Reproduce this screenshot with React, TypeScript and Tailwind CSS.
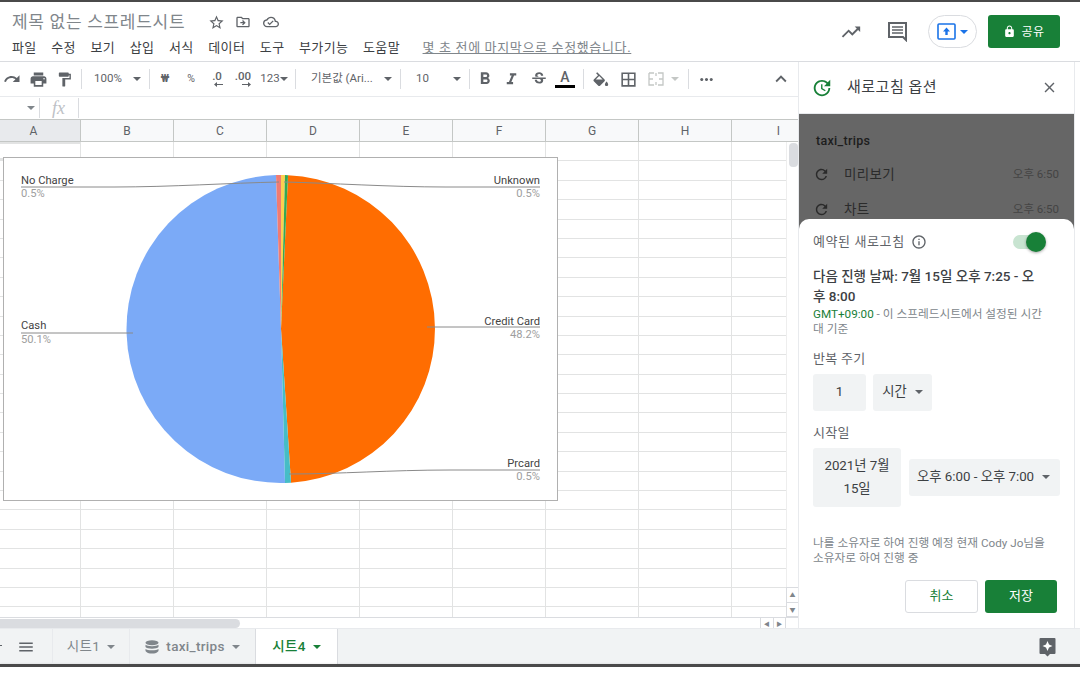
import type { ReactNode } from 'react'
import {
  MdStarBorder,
  MdOutlineDriveFileMove,
  MdOutlineCloudDone,
  MdTrendingUp,
  MdLock,
  MdRedo,
  MdPrint,
  MdFormatPaint,
  MdFormatBold,
  MdFormatItalic,
  MdStrikethroughS,
  MdBorderAll,
  MdMoreHoriz,
  MdExpandLess,
  MdRefresh,
  MdUpdate,
  MdInfoOutline,
  MdClose,
  MdMenu,
} from 'react-icons/md'

const font = 'font-[Roboto,"Noto_Sans_CJK_KR",sans-serif]'
const menus = ['파일', '수정', '보기', '삽입', '서식', '데이터', '도구', '부가기능', '도움말']
const columns = ['B', 'C', 'D', 'E', 'F', 'G', 'H']

function Caret({ className = 'border-t-[#5f6368]' }: { className?: string }) {
  return <span className={`inline-block w-0 h-0 border-x-[4px] border-x-transparent border-t-[4px] ${className}`} />
}

function Sep() {
  return <span className="w-px h-[20px] bg-[#dadce0] shrink-0" />
}

function Cell({ className, children }: { className: string; children?: ReactNode }) {
  return <div className={`flex items-center justify-center shrink-0 text-[#5f6368] whitespace-nowrap ${className}`}>{children}</div>
}

function DecimalBtn({ label, dir }: { label: string; dir: 'left' | 'right' }) {
  return (
    <div className="flex flex-col items-center leading-[11px]">
      <span className="text-[11.5px] font-medium">{label}</span>
      <svg width="10" height="5" viewBox="0 0 10 5" className={dir === 'right' ? 'ml-[6px]' : 'ml-[4px]'}>
        {dir === 'left' ? <path d="M3 0 L0 2.500 L3 5 V3 H9 V2 H3 Z" fill="#5f6368" /> : <path d="M7 0 L10 2.500 L7 5 V3 H1 V2 H7 Z" fill="#5f6368" />}
      </svg>
    </div>
  )
}

function PieChart() {
  return (
    <svg width="553" height="342" viewBox="4 158 553 342" className="block">
      <path d="M281 329 L288 175.160 A154 154 0 0 1 291 482.670 Z" fill="#ff6d01" />
      <path d="M281 329 L285 482.950 A154 154 0 1 1 276 175.080 Z" fill="#7baaf7" />
      <path d="M281 329 L276 175.080 L281 175 Z" fill="#f07b72" />
      <path d="M281 329 L281 175 L285 175.050 Z" fill="#fcd04f" />
      <path d="M281 329 L285 175.050 L288 175.160 Z" fill="#34a853" />
      <path d="M281 329 L291 482.670 L285 482.950 Z" fill="#46bdc6" />
      <g fill="none" stroke="#8a8a8a" strokeWidth="1">
        <path d="M21 187 H115 C170 187 230 183 279 182" />
        <path d="M540 187 H445 C390 187 330 183 284 182" />
        <path d="M21 333 H133" />
        <path d="M540 327 H427" />
        <path d="M540 470 H450 C390 470 340 474 289 474" />
      </g>
      <g fontSize="11.2" fontFamily="Roboto, sans-serif">
        <text x="21" y="183.500" fill="#444">No Charge</text>
        <text x="21" y="197" fill="#9e9e9e">0.5%</text>
        <text x="540" y="183.500" fill="#444" textAnchor="end">Unknown</text>
        <text x="540" y="197" fill="#9e9e9e" textAnchor="end">0.5%</text>
        <text x="21" y="329" fill="#444">Cash</text>
        <text x="21" y="343" fill="#9e9e9e">50.1%</text>
        <text x="540" y="324.500" fill="#444" textAnchor="end">Credit Card</text>
        <text x="540" y="338" fill="#9e9e9e" textAnchor="end">48.2%</text>
        <text x="540" y="466.500" fill="#444" textAnchor="end">Prcard</text>
        <text x="540" y="480" fill="#9e9e9e" textAnchor="end">0.5%</text>
      </g>
    </svg>
  )
}

function Sheet() {
  return (
    <div className="relative flex-1 overflow-hidden">
      <div className="flex h-[23px] bg-[#f8f9fa] border-t border-b border-[#c4c7c5] text-[12px] text-[#5f6368]">
        <div className="w-[81px] shrink-0 bg-[#e8eaed] border-r border-[#c4c7c5] flex items-center justify-center pr-[13px]">A</div>
        {columns.map((c) => (
          <div key={c} className="w-[93px] shrink-0 border-r border-[#c4c7c5] flex items-center justify-center">{c}</div>
        ))}
        <div className="w-[93px] shrink-0 flex items-center justify-center">I</div>
      </div>
      <div className="h-[475px] overflow-hidden">
        {Array.from({ length: 25 }).map((_, r) => (
          <div key={r} className="flex h-[19.4px] border-b border-[#e2e3e3]">
            <div className={`w-[81px] shrink-0 border-r border-[#e2e3e3] ${r === 0 ? 'border-2 border-[#1a73e8] border-l-0' : ''}`} />
            {columns.map((c) => (
              <div key={c} className="w-[93px] shrink-0 border-r border-[#e2e3e3]" />
            ))}
            <div className="w-[93px] shrink-0" />
          </div>
        ))}
      </div>
      <div className="absolute left-[3px] top-[38px] border border-[#b0b0b0] bg-white">
        <PieChart />
      </div>
      {/* scrollbars */}
      <div className="absolute right-0 top-[23px] bottom-[11px] w-[12px] bg-white border-l border-[#eeeeee]">
        <div className="ml-[2px] mt-px w-[9px] h-[24px] rounded-[4px] bg-[#dadce0]" />
      </div>
      <div className="absolute right-0 bottom-[11px] w-[12px] h-[30px] flex flex-col bg-white border-y border-l border-[#dadce0] items-center text-[6px] text-[#80868b]">
        <span className="flex-1 flex items-center border-b border-[#dadce0] w-full justify-center">▲</span>
        <span className="flex-1 flex items-center justify-center">▼</span>
      </div>
      <div className="absolute left-0 right-0 bottom-0 h-[11px] bg-white border-t border-[#dadce0] flex items-center">
        <div className="w-[240px] h-[9px] rounded-r-[5px] bg-[#dadce0]" />
        <div className="ml-[520px] flex w-[26px] h-full border-x border-[#dadce0] text-[6px] text-[#80868b]">
          <span className="flex-1 flex items-center justify-center border-r border-[#dadce0]">◀</span>
          <span className="flex-1 flex items-center justify-center">▶</span>
        </div>
      </div>
    </div>
  )
}

function RefreshRow({ label }: { label: string }) {
  return (
    <div className="flex items-center h-[35px] pl-[14px] pr-[15px] text-[#2b2b2b]">
      <MdRefresh className="text-[#2a2a2a] w-[17px] h-[17px]" />
      <span className="ml-[14px] text-[13.5px] tracking-[0.3px]">{label}</span>
      <span className="ml-auto text-[11.5px] text-[#444444]">오후 6:50</span>
    </div>
  )
}

function SidePanel() {
  return (
    <div className="w-[276px] shrink-0 flex flex-col border-l border-[#e8eaed] bg-white">
      <div className="h-[52px] shrink-0 flex items-center pl-[12px] pr-[16px] border-b border-[#e8eaed]">
        <MdUpdate className="w-[22px] h-[22px] text-[#188038]" />
        <span className="ml-[14px] text-[15px] tracking-[0.5px] text-[#3c4043]">새로고침 옵션</span>
        <MdClose className="ml-auto w-[17px] h-[17px] text-[#5f6368]" />
      </div>
      <div className="relative flex-1 bg-[#666666]">
        <div className="pt-[18px]">
          <div className="pl-[17px] text-[12.5px] font-medium text-[#1d1d1d] h-[25px] tracking-[0.3px]">taxi_trips</div>
          <RefreshRow label="미리보기" />
          <RefreshRow label="차트" />
        </div>
        <div className="absolute left-0 right-0 top-[105px] bottom-0 bg-white rounded-t-[10px] pl-[14px] pr-[14px] pt-[13px]">
          <div className="flex items-center h-[20px]">
            <span className="text-[13px] tracking-[0.6px] text-[#5f6368]">예약된 새로고침</span>
            <MdInfoOutline className="ml-[6px] w-[16px] h-[16px] text-[#5f6368]" />
            <div className="relative ml-auto mr-[19px] w-[28px] h-[14px] rounded-full bg-[#c8e4d1]">
              <span className="absolute -right-[5px] -top-[3px] w-[20px] h-[20px] rounded-full bg-[#188038] shadow-[0_1px_3px_rgba(0,0,0,0.35)]" />
            </div>
          </div>
          <p className="mt-[15px] text-[13.5px] leading-[19.5px] font-medium text-[#3c4043] w-[228px]">
            다음 진행 날짜: 7월 15일 오후 7:25 - 오후 8:00
          </p>
          <p className="mt-[1px] text-[11.7px] leading-[15px] text-[#80868b] w-[236px]">
            <span className="text-[#188038]">GMT+09:00</span> - 이 스프레드시트에서 설정된 시간대 기준
          </p>
          <div className="mt-[11.5px] text-[13px] tracking-[0.3px] text-[#5f6368] leading-[20px]">반복 주기</div>
          <div className="mt-[5px] flex gap-[7px]">
            <div className="w-[53px] h-[37px] rounded-[3px] bg-[#f1f3f4] flex items-center justify-center text-[13.3px] text-[#3c4043]">1</div>
            <div className="w-[59px] h-[37px] rounded-[3px] bg-[#f1f3f4] flex items-center justify-center gap-[8px] text-[13.3px] text-[#3c4043]">
              시간 <Caret />
            </div>
          </div>
          <div className="mt-[12px] text-[13px] tracking-[0.3px] text-[#5f6368] leading-[20px]">시작일</div>
          <div className="mt-[5px] flex items-center gap-[8px]">
            <div className="w-[88px] h-[59px] rounded-[3px] bg-[#f1f3f4] flex items-center justify-center text-center px-[10px] text-[13.3px] leading-[23px] text-[#3c4043]">
              2021년 7월 15일
            </div>
            <div className="w-[151px] h-[37px] rounded-[3px] bg-[#f1f3f4] flex items-center pl-[8px] gap-[8px] text-[13.3px] text-[#3c4043] whitespace-nowrap">
              오후 6:00 - 오후 7:00 <Caret />
            </div>
          </div>
          <p className="mt-[29.5px] text-[11.7px] leading-[15px] text-[#80868b] w-[240px]">
            나를 소유자로 하여 진행 예정 현재 Cody Jo님을 소유자로 하여 진행 중
          </p>
          <div className="mt-[13.5px] flex justify-end gap-[7px] pr-[3px]">
            <button className="w-[73px] h-[33px] rounded-[3px] border border-[#dadce0] text-[13px] text-[#188038]">취소</button>
            <button className="w-[72px] h-[33px] rounded-[3px] bg-[#188038] text-[13px] text-white">저장</button>
          </div>
        </div>
      </div>
    </div>
  )
}

export default function App() {
  return (
    <div className={`w-[1080px] h-[675px] overflow-hidden bg-white flex flex-col ${font}`}>
      <div className="h-[2px] shrink-0 bg-[#4a4a4a]" />
      {/* title + menu */}
      <div className="h-[60px] shrink-0 flex items-start border-b border-[#dadce0]">
        <div className="flex-1 pl-[12px] pt-[8px]">
          <div className="flex items-center h-[24px]">
            <span className="text-[17px] tracking-[0.7px] text-[#80868b] leading-[24px]">제목 없는 스프레드시트</span>
            <MdStarBorder className="ml-[23px] w-[17px] h-[17px] text-[#5f6368]" />
            <MdOutlineDriveFileMove className="ml-[10px] w-[16px] h-[16px] text-[#5f6368]" />
            <MdOutlineCloudDone className="ml-[12px] w-[16px] h-[16px] text-[#5f6368]" />
          </div>
          <div className="flex items-center mt-[4px] text-[13px] text-[#3c4043] leading-[20px] tracking-[0.4px]">
            {menus.map((m) => (
              <span key={m} className="mr-[14.5px] whitespace-nowrap">{m}</span>
            ))}
            <span className="ml-[8px] underline text-[#80868b] whitespace-nowrap tracking-[0.65px]">몇 초 전에 마지막으로 수정했습니다.</span>
          </div>
        </div>
        <div className="flex items-center mt-[13px] mr-[20px]">
          <MdTrendingUp className="w-[22px] h-[22px] text-[#5f6368]" />
          <svg width="21" height="21" viewBox="0 0 21 21" className="ml-[25px]">
            <path d="M2 2 H19 V19 L16 16 H2 Z" fill="none" stroke="#5f6368" strokeWidth="2" />
            <path d="M5 6 H16 M5 9 H16 M5 12 H16" stroke="#5f6368" strokeWidth="1.5" />
          </svg>
          <div className="ml-[20px] w-[49px] h-[33px] rounded-full border border-[#dadce0] flex items-center justify-center gap-[3px]">
            <svg width="20" height="17" viewBox="0 0 20 17">
              <rect x="1" y="1" width="17" height="15" rx="1" fill="none" stroke="#1a73e8" strokeWidth="1.6" />
              <path d="M9.500 4.500 L13 8.500 H10.700 V12 H8.300 V8.500 H6 Z" fill="#1a73e8" />
            </svg>
            <Caret className="border-t-[#1a73e8]" />
          </div>
          <div className="ml-[11px] w-[72px] h-[33px] rounded-[3px] bg-[#188038] flex items-center justify-center gap-[5px] text-white text-[12px] tracking-[0.5px]">
            <MdLock className="w-[13px] h-[13px]" /> 공유
          </div>
        </div>
      </div>
      {/* body */}
      <div className="h-[566px] shrink-0 flex min-h-0">
        <div className="flex-1 min-w-0 flex flex-col">
          <div className="h-[35px] shrink-0 flex items-center border-b border-[#e8eaed] text-[11.5px]">
            <Cell className="w-[24px]"><MdRedo className="w-[18px] h-[18px]" /></Cell>
            <Cell className="w-[28px]"><MdPrint className="w-[19px] h-[19px]" /></Cell>
            <Cell className="w-[24px]"><MdFormatPaint className="w-[17px] h-[17px]" /></Cell>
            <span className="ml-[5px] flex"><Sep /></span>
            <Cell className="ml-[6px] w-[40px]">100%</Cell>
            <Cell className="w-[18px]"><Caret /></Cell>
            <span className="ml-[3px] flex"><Sep /></span>
            <Cell className="ml-[2px] w-[26px] text-[10.5px] font-bold">₩</Cell>
            <Cell className="w-[26px] text-[10.5px]">%</Cell>
            <Cell className="w-[26px]"><DecimalBtn label=".0" dir="left" /></Cell>
            <Cell className="w-[26px]"><DecimalBtn label=".00" dir="right" /></Cell>
            <Cell className="ml-[4px] w-[20px]">123</Cell>
            <Cell className="w-[8px]"><Caret /></Cell>
            <span className="ml-[7px] flex"><Sep /></span>
            <Cell className="ml-[15px] w-[69px] justify-start!">기본값 (Ari...</Cell>
            <Cell className="w-[16px]"><Caret /></Cell>
            <span className="ml-[4px] flex"><Sep /></span>
            <Cell className="ml-[15px] w-[32px] justify-start! text-[#3c4043]">10</Cell>
            <Cell className="w-[18px]"><Caret /></Cell>
            <span className="ml-[3px] flex"><Sep /></span>
            <Cell className="ml-[2px] w-[26px]"><MdFormatBold className="w-[20px] h-[20px]" /></Cell>
            <Cell className="w-[27px]"><MdFormatItalic className="w-[19px] h-[19px]" /></Cell>
            <Cell className="w-[27px]"><MdStrikethroughS className="w-[18px] h-[18px]" /></Cell>
            <Cell className="w-[26px]">
              <span className="flex flex-col items-center">
                <span className="text-[14px] leading-[15px] font-medium">A</span>
                <span className="w-[20px] h-[3px] bg-black" />
              </span>
            </Cell>
            <span className="ml-[5px] flex"><Sep /></span>
            <Cell className="ml-[3px] w-[26px]">
              <svg width="18" height="17" viewBox="0 0 22 18" fill="#5f6368">
                <path d="M16.560 8.940 L7.620 0 L6.210 1.410 L8.590 3.790 L3.440 8.940 C2.850 9.530 2.850 10.480 3.440 11.060 L8.940 16.560 C9.230 16.850 9.620 17 10 17 C10.380 17 10.770 16.850 11.060 16.560 L16.560 11.060 C17.150 10.480 17.150 9.530 16.560 8.940 Z" />
                <path d="M19 11.500 C19 11.500 17 13.670 17 15 C17 16.100 17.900 17 19 17 C20.100 17 21 16.100 21 15 C21 13.670 19 11.500 19 11.500 Z" />
                <path d="M5.800 9 L10 4.800 L14.200 9 Z" fill="#fff" />
              </svg>
            </Cell>
            <Cell className="ml-[2px] w-[26px]"><MdBorderAll className="w-[19px] h-[19px]" /></Cell>
            <Cell className="ml-[4px] w-[22px]">
              <svg width="16" height="14" viewBox="0 0 16 14">
                <path d="M1 1 H6 M10 1 H15 V13 H10 M6 13 H1 V1 M1 7 H5 M11 7 H15 M8 1 V4 M8 10 V13" fill="none" stroke="#c4c7c5" strokeWidth="1.3" />
              </svg>
            </Cell>
            <Cell className="w-[16px]"><Caret className="border-t-[#c4c7c5]" /></Cell>
            <span className="ml-[5px] flex"><Sep /></span>
            <Cell className="ml-[4px] w-[26px]"><MdMoreHoriz className="w-[19px] h-[19px]" /></Cell>
            <MdExpandLess className="ml-auto mr-[6px] w-[22px] h-[22px] text-[#5f6368]" />
          </div>
          <div className="h-[22px] shrink-0 flex items-center">
            <span className="ml-[27px] flex"><Caret className="border-t-[#80868b]" /></span>
            <span className="ml-[4px] flex"><Sep /></span>
            <span className="ml-[12px] w-[19px] text-[18px] leading-[20px] italic text-[#bdc1c6] font-['Liberation_Serif',serif]">fx</span>
            <span className="ml-[7px] flex"><Sep /></span>
          </div>
          <Sheet />
        </div>
        <SidePanel />
        <div className="w-[6px] shrink-0 bg-white border-l border-[#e8eaed]" />
      </div>
      {/* sheet tabs */}
      <div className="h-[36px] shrink-0 flex items-stretch bg-[#f1f3f4] border-t border-[#e8eaed] text-[13.5px] text-[#80868b] tracking-[0.3px]">
        <div className="w-[53px] flex items-center border-r border-[#e8eaed] relative">
          <span className="absolute left-0 top-[16px] w-[2px] h-px bg-[#5f6368]" />
          <MdMenu className="ml-[17px] w-[18px] h-[18px] text-[#5f6368]" />
        </div>
        <div className="w-[77px] flex items-center justify-center gap-[7px] border-r border-[#e8eaed]">
          시트1 <Caret className="border-t-[#80868b]" />
        </div>
        <div className="w-[126px] flex items-center justify-center gap-[7px] border-r border-[#dadce0] font-medium">
          <svg width="14" height="14" viewBox="0 0 14 14" fill="#80868b">
            <ellipse cx="7" cy="2.800" rx="6.500" ry="2.500" />
            <path d="M.5 4.800 C2 6.600 12 6.600 13.500 4.800 V7 C12 9.300 2 9.300 .5 7 Z" />
            <path d="M.5 9 C2 10.800 12 10.800 13.500 9 V11 C12 14.400 2 14.400 .5 11 Z" />
          </svg>
          taxi_trips <Caret className="border-t-[#80868b]" />
        </div>
        <div className="w-[82px] bg-white flex items-center justify-center gap-[7px] border-r border-[#dadce0] text-[#188038] font-medium">
          시트4 <Caret className="border-t-[#188038]" />
        </div>
        <div className="ml-auto mr-[24px] flex items-center">
          <svg width="17" height="20" viewBox="0 0 17 20">
            <path d="M1.500 1 H15.500 A1 1 0 0 1 16.500 2 V16 A1 1 0 0 1 15.500 17 H11 L8.500 19.500 L6 17 H1.500 A1 1 0 0 1 .5 16 V2 A1 1 0 0 1 1.500 1 Z" fill="#5f6368" />
            <path d="M8.500 4 L10 7.500 L13.500 9 L10 10.500 L8.500 14 L7 10.500 L3.500 9 L7 7.500 Z" fill="#fff" />
          </svg>
        </div>
      </div>
      <div className="h-[3px] shrink-0 bg-[#4a4a4a] shadow-[0_1px_3px_rgba(0,0,0,0.3)]" />
      <div className="flex-1 bg-white" />
    </div>
  )
}
